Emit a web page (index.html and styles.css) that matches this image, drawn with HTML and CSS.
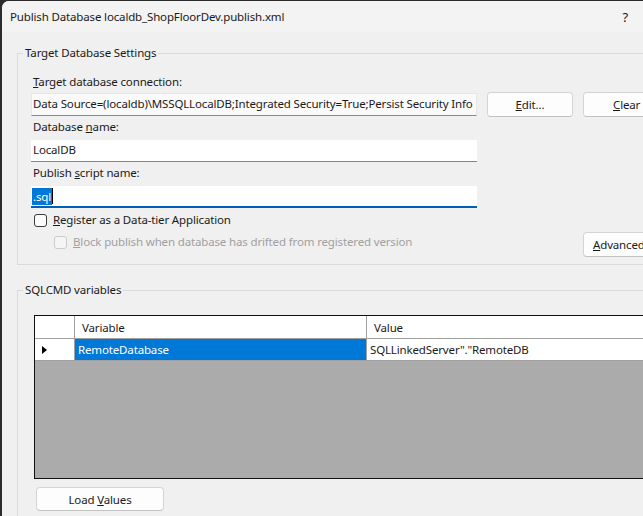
FILE: index.html
```html
<!DOCTYPE html>
<html>
<head>
<meta charset="utf-8">
<link rel="stylesheet" href="styles.css">
</head>
<body>
<div class="window">
  <div class="titlebar">
    <span class="title">Publish Database localdb_ShopFloorDev.publish.xml</span>
    <span class="help">?</span>
  </div>
  <div class="content">
    <fieldset class="group">
      <legend>Target Database Settings</legend>
      <div class="group-body settings">
        <div class="label"><u>T</u>arget database connection:</div>
        <div class="textbox readonly conn">Data Source=(localdb)\MSSQLLocalDB;Integrated Security=True;Persist Security Info</div>
        <button class="btn btn-edit"><u>E</u>dit...</button>
        <button class="btn btn-clear"><u>C</u>lear</button>
        <div class="label label-db">Database <u>n</u>ame:</div>
        <div class="textbox tb-db">LocalDB</div>
        <div class="label label-script">Publish <u>s</u>cript name:</div>
        <div class="textbox tb-script focused"><span class="sel">.sql</span><span class="caret"></span></div>
        <div class="check check-register"><span class="box"></span><span><u>R</u>egister as a Data-tier Application</span></div>
        <div class="check check-block disabled"><span class="box"></span><span><u>B</u>lock publish when database has drifted from registered version</span></div>
        <button class="btn btn-advanced"><u>A</u>dvanced...</button>
      </div>
    </fieldset>
    <fieldset class="group group-sqlcmd">
      <legend>SQLCMD variables</legend>
      <div class="group-body vars">
        <div class="grid">
          <div class="grid-row header">
            <div class="cell rowhead"></div>
            <div class="cell col-var">Variable</div>
            <div class="cell col-val">Value</div>
          </div>
          <div class="grid-row data">
            <div class="cell rowhead"><svg class="arrow" width="5" height="8" viewBox="0 0 5 8"><path d="M0 0 L5 4 L0 8 Z" fill="#000"/></svg></div>
            <div class="cell col-var selected">RemoteDatabase</div>
            <div class="cell col-val">SQLLinkedServer"."RemoteDB</div>
          </div>
          <div class="grid-empty"></div>
        </div>
        <button class="btn btn-load">Load <u>V</u>alues</button>
      </div>
    </fieldset>
  </div>
</div>
</body>
</html>
```
FILE: styles.css
```css
html, body {
  margin: 0;
  padding: 0;
}
body {
  background: #2b2b2b;
  font-family: "Noto Sans", "Open Sans", sans-serif;
  font-size: 11.5px;
  letter-spacing: -0.15px;
  color: #1a1a1a;
  overflow: hidden;
}
.window {
  width: 641px;
  height: 515px;
  margin: 1px 0 0 2px;
  background: #f0f0f0;
  border-top-left-radius: 7px;
  overflow: hidden;
}
.titlebar {
  height: 31px;
  display: flex;
  align-items: center;
  padding: 0 15px 0 8px;
  background: #f3f3f3;
}
.help {
  margin-left: auto;
  font-size: 13px;
}
.content {
  padding: 13px 0 0 15px;
}
.group {
  margin: 0;
  padding: 0;
  border: 1px solid #dadada;
  width: 700px;
  min-width: 0;
}
.group legend {
  margin-left: 5px;
  padding: 0 2px;
  line-height: 16px;
}
.group-body.settings {
  padding: 13px 0 7px 13px;
  display: grid;
  grid-template-columns: 446px 86px 86px;
  column-gap: 10px;
  align-items: center;
}
.label {
  grid-column: 1;
  line-height: 16px;
  padding-left: 2px;
}
.textbox {
  grid-column: 1;
  box-sizing: border-box;
  height: 22px;
  line-height: 20px;
  padding: 0 2px;
  background: #fff;
  border-bottom: 1px solid #878787;
  white-space: nowrap;
  overflow: hidden;
}
.conn {
  margin-top: 2px;
  height: 23px;
  background: #fafafa;
  border: 1px solid #e6e6e6;
  border-bottom-color: #8a8a8a;
  padding: 0 1px;
}
.label-db { margin-top: 2px; }
.tb-db { margin-top: 5px; }
.label-script { margin-top: 3px; }
.tb-script {
  margin-top: 5px;
  border-bottom: 2px solid #005fb8;
  padding-left: 1px;
  display: flex;
  align-items: center;
}
.sel {
  background: #0078d7;
  color: #fff;
  line-height: 17px;
  padding: 0 1px;
}
.caret {
  width: 1px;
  height: 16px;
  background: #000;
}
.btn {
  box-sizing: border-box;
  height: 25px;
  background: #fdfdfd;
  border: 1px solid #d4d4d4;
  border-bottom-color: #c2c2c2;
  border-radius: 4px;
  font-family: inherit;
  font-size: 11.5px;
  letter-spacing: -0.15px;
  color: #1a1a1a;
  padding: 0;
  text-align: center;
}
.btn-edit { grid-column: 2; grid-row: 2; margin-top: 2px; }
.btn-clear { grid-column: 3; grid-row: 2; margin-top: 2px; text-align: left; padding-left: 29px; }
.btn-advanced {
  grid-column: 3;
  grid-row: 8;
  align-self: start;
  text-align: left;
  padding-left: 9px;
  margin-top: 4px;
  white-space: nowrap;
  overflow: hidden;
}
.check {
  display: flex;
  align-items: center;
  line-height: 16px;
}
.check .box {
  box-sizing: border-box;
  width: 13px;
  height: 13px;
  border: 1px solid #3c3c3c;
  border-radius: 3px;
  background: #fbfbfb;
  margin-right: 6px;
}
.check-register {
  grid-column: 1 / span 3;
  grid-row: 7;
  margin: 4px 0 0 3px;
}
.check-block {
  grid-column: 1 / span 2;
  grid-row: 8;
  align-self: start;
  margin: 6px 0 0 23px;
  white-space: nowrap;
}
.disabled { color: #a0a0a0; }
.disabled .box {
  border-color: #cbcbcb;
  background: #f5f5f5;
}

.group-sqlcmd {
  margin-top: 17px;
  height: 260px;
}
.group-body.vars {
  padding: 17px 0 0 16px;
}
.grid {
  width: 640px;
  height: 162px;
  border: 1px solid #101010;
  background: #ababab;
  display: flex;
  flex-direction: column;
}
.grid-row {
  display: grid;
  grid-template-columns: 40px 292px 1fr;
  background: #fff;
}
.cell {
  border-right: 1px solid #a0a0a0;
  border-bottom: 1px solid #a0a0a0;
  white-space: nowrap;
  overflow: hidden;
  display: flex;
  align-items: center;
}
.header .cell { height: 22px; }
.data .cell { height: 21px; }
.header .col-var { padding-left: 7px; }
.header .col-val { padding-left: 7px; }
.data .col-var { padding-left: 3px; }
.data .col-val { padding-left: 3px; }
.rowhead { padding-left: 7px; }
.selected {
  background: #0078d7;
  color: #fff;
}
.grid-empty { flex: 1; }
.btn-load {
  display: block;
  width: 128px;
  height: 24px;
  margin: 8px 0 0 2px;
}
```
